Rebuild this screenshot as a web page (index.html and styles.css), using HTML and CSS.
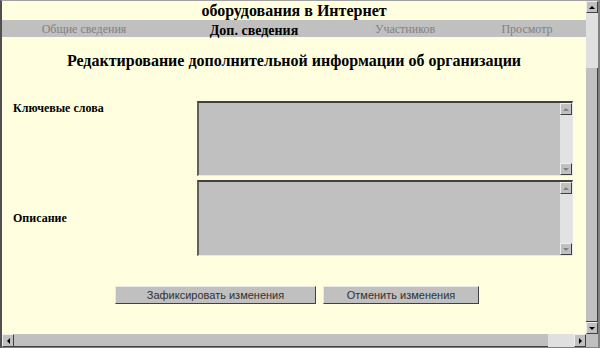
FILE: index.html
```html
<!DOCTYPE html>
<html lang="ru">
<head>
  <meta charset="UTF-8" />
  <title>Редактирование дополнительной информации</title>
  <link rel="stylesheet" href="styles.css">
</head>
<body>
  <div class="window">
    <div class="viewport">
      <h1 class="title">оборудования в Интернет</h1>

      <div class="tabs">
        <span class="tab">Общие сведения</span>
        <span class="tab active">Доп. сведения</span>
        <span class="tab">Участников</span>
        <span class="tab">Просмотр</span>
      </div>

      <h2 class="heading">Редактирование дополнительной информации об организации</h2>

      <div class="form">
        <label class="label top">Ключевые слова</label>
        <div class="field first">
          <div class="field-body"></div>
          <div class="mini-scroll">
            <span class="mini-btn"><i class="arrow up small"></i></span>
            <span class="mini-track"></span>
            <span class="mini-btn"><i class="arrow down small"></i></span>
          </div>
        </div>

        <label class="label">Описание</label>
        <div class="field">
          <div class="field-body"></div>
          <div class="mini-scroll">
            <span class="mini-btn"><i class="arrow up small"></i></span>
            <span class="mini-track"></span>
            <span class="mini-btn"><i class="arrow down small"></i></span>
          </div>
        </div>
      </div>

      <div class="buttons">
        <button class="btn wide">Зафиксировать изменения</button>
        <button class="btn">Отменить изменения</button>
      </div>
    </div>

    <div class="vscroll">
      <span class="sbtn"><i class="arrow up"></i></span>
      <span class="track"></span>
      <span class="thumb"></span>
      <span class="sbtn"><i class="arrow down"></i></span>
    </div>

    <div class="hscroll">
      <span class="sbtn"><i class="arrow left"></i></span>
      <span class="thumb"></span>
      <span class="track"></span>
      <span class="sbtn"><i class="arrow right"></i></span>
    </div>

    <div class="corner"></div>
  </div>
</body>
</html>
```

FILE: styles.css
```css
body {
  margin: 0;
  background: #c0c0c0;
  font-family: "Liberation Serif", "Times New Roman", serif;
}
.window {
  width: 600px;
  height: 348px;
  box-sizing: border-box;
  display: grid;
  grid-template-columns: 584px 12px;
  grid-template-rows: 333px 13px;
  border-top: 1px solid #a0a0a0;
  border-left: 2px solid #505050;
  border-right: 2px solid #808080;
  border-bottom: 1px solid #808080;
}
.viewport {
  background: #ffffe0;
  overflow: hidden;
}
.title {
  margin: 0;
  height: 19px;
  font-size: 16px;
  line-height: 19px;
  text-align: center;
  color: #000;
}
.tabs {
  height: 17px;
  background: #c0c0c0;
  display: grid;
  grid-template-columns: 164px 176px 126px 118px;
  align-items: center;
  text-align: center;
}
.tab {
  font-size: 12px;
  color: #808080;
  line-height: 17px;
}
.tab.active {
  font-size: 14px;
  font-weight: bold;
  color: #000;
  padding-top: 2px;
}
.heading {
  margin: 14px 0 0;
  font-size: 16px;
  line-height: 20px;
  text-align: center;
  color: #000;
}
.form {
  margin-top: 30px;
  display: grid;
  grid-template-columns: 195px 376px;
  row-gap: 4px;
}
.label {
  padding-left: 11px;
  font-size: 12px;
  font-weight: bold;
  line-height: 14px;
  align-self: center;
}
.label.top {
  align-self: start;
}
.field {
  height: 76px;
  box-sizing: border-box;
  display: flex;
  background: #c0c0c0;
  border-top: 2px solid #404040;
  border-left: 2px solid #606060;
  border-right: 1px solid #e8e8e8;
  border-bottom: 1px solid #e8e8e8;
}
.field.first {
  height: 75px;
}
.field-body {
  flex: 1;
}
.mini-scroll {
  width: 12px;
  display: flex;
  flex-direction: column;
}
.mini-track {
  flex: 1;
  background: #e2e2e2;
}
.mini-btn, .sbtn {
  height: 12px;
  box-sizing: border-box;
  display: flex;
  align-items: center;
  justify-content: center;
  background: #c0c0c0;
  border: 1px solid;
  border-color: #eeeeee #404040 #404040 #eeeeee;
}
.arrow {
  width: 0;
  height: 0;
  border: 3px solid transparent;
}
.arrow.up {
  border-bottom: 3px solid #000;
  border-top-width: 0;
}
.arrow.down {
  border-top: 3px solid #000;
  border-bottom-width: 0;
}
.arrow.left {
  border-right: 3px solid #000;
  border-left-width: 0;
}
.arrow.right {
  border-left: 3px solid #000;
  border-right-width: 0;
}
.arrow.small.up {
  border-bottom-color: #808080;
}
.arrow.small.down {
  border-top-color: #808080;
}
.buttons {
  margin-top: 30px;
  display: flex;
  gap: 7px;
  padding-left: 113px;
}
.btn {
  height: 18px;
  width: 156px;
  padding: 0;
  font-family: "Liberation Sans", Arial, sans-serif;
  font-size: 11px;
  color: #303030;
  background: #c0c0c0;
  border: 1px solid;
  border-color: #e8e8e8 #404040 #404040 #e8e8e8;
}
.btn.wide {
  width: 201px;
}
.vscroll {
  display: flex;
  flex-direction: column;
}
.vscroll .track {
  height: 55px;
  background: #e0e0e0;
}
.vscroll .thumb {
  flex: 1;
  background: #c0c0c0;
  border-right: 1px solid #404040;
  border-bottom: 1px solid #404040;
}
.hscroll {
  display: flex;
}
.hscroll .sbtn {
  width: 12px;
  height: 13px;
}
.hscroll .thumb {
  width: 534px;
  background: #c0c0c0;
  border-bottom: 1px solid #404040;
}
.hscroll .track {
  flex: 1;
  background: #e0e0e0;
}
.corner {
  background: #c0c0c0;
}
```
